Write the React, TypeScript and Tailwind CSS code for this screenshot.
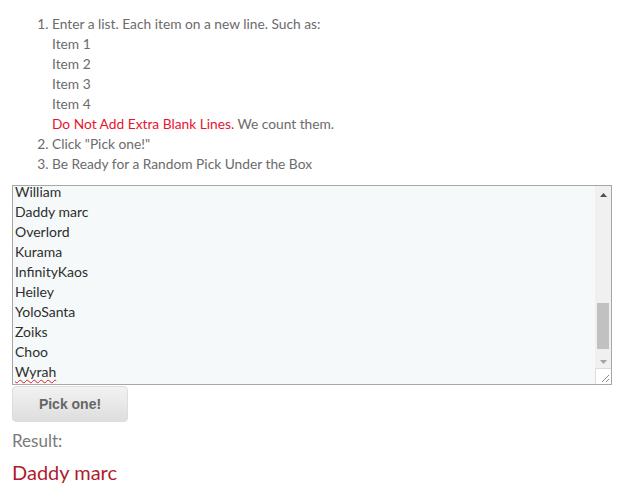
import { useState } from "react";

const names = [
  "William",
  "Daddy marc",
  "Overlord",
  "Kurama",
  "InfinityKaos",
  "Heiley",
  "YoloSanta",
  "Zoiks",
  "Choo",
  "Wyrah",
];

export default function App() {
  const [result] = useState("Daddy marc");

  return (
    <div className="min-h-[498px] bg-white px-3 pt-[14px] font-['Lato','Open_Sans',sans-serif] text-[14px] leading-5 text-[#6b6b6b]">
      <ol className="ml-[26px] list-decimal pl-[14px] text-[13.75px] marker:text-[#6b6b6b]">
        <li>
          Enter a list. Each item on a new line. Such as:
          <div>Item 1</div>
          <div>Item 2</div>
          <div>Item 3</div>
          <div>Item 4</div>
          <div>
            <span className="text-[#e8142f]">Do Not Add Extra Blank Lines.</span>{" "}
            We count them.
          </div>
        </li>
        <li>Click "Pick one!"</li>
        <li>Be Ready for a Random Pick Under the Box</li>
      </ol>

      <div className="relative mt-[11px] flex h-[200px] w-[600px] border border-[#a7a7a7] bg-[#f5f9f9]">
        <div className="flex-1 overflow-hidden pl-[2px]">
          <div className="-mt-[4px] text-[#2e2e2e]">
            {names.map((n) => (
              <div
                key={n}
                className={
                  n === "Wyrah"
                    ? "underline decoration-wavy decoration-[#e02020] decoration-1 underline-offset-2"
                    : ""
                }
              >
                {n}
              </div>
            ))}
          </div>
        </div>
        <div className="flex w-[16px] flex-col bg-[#f0f0f0]">
          <div className="flex h-[17px] items-center justify-center">
            <svg width="7" height="4" viewBox="0 0 7 4">
              <path d="M3.5 0 L7 4 L0 4 Z" fill="#505050" />
            </svg>
          </div>
          <div className="flex-1 px-[2px] pt-[100px] pb-[4px]">
            <div className="h-[46px] bg-[#c1c1c1]" />
          </div>
          <div className="flex h-[12px] items-center justify-center">
            <svg width="7" height="4" viewBox="0 0 7 4">
              <path d="M0 0 L7 0 L3.5 4 Z" fill="#a3a3a3" />
            </svg>
          </div>
          <div className="flex h-[16px] items-end justify-end border-t border-l border-[#dcdcdc] bg-white p-[1px]">
            <svg width="10" height="10" viewBox="0 0 10 10">
              <path d="M9 2 L2 9 M9 6 L6 9" stroke="#8a8a8a" strokeWidth="1" />
            </svg>
          </div>
        </div>
      </div>

      <button className="mt-[1px] h-[36px] w-[116px] rounded-[4px] border border-[#dddddd] bg-gradient-to-b from-[#f2f2f2] to-[#dedede] font-['Liberation_Sans',Arial,sans-serif] text-[14px] font-bold text-[#666666]">
        Pick one!
      </button>

      <div className="mt-[7px] text-[17px] leading-6 text-[#7a7a7a]">Result:</div>
      <div className="mt-[5px] text-[20px] leading-7 text-[#b01c2e]">{result}</div>
    </div>
  );
}
